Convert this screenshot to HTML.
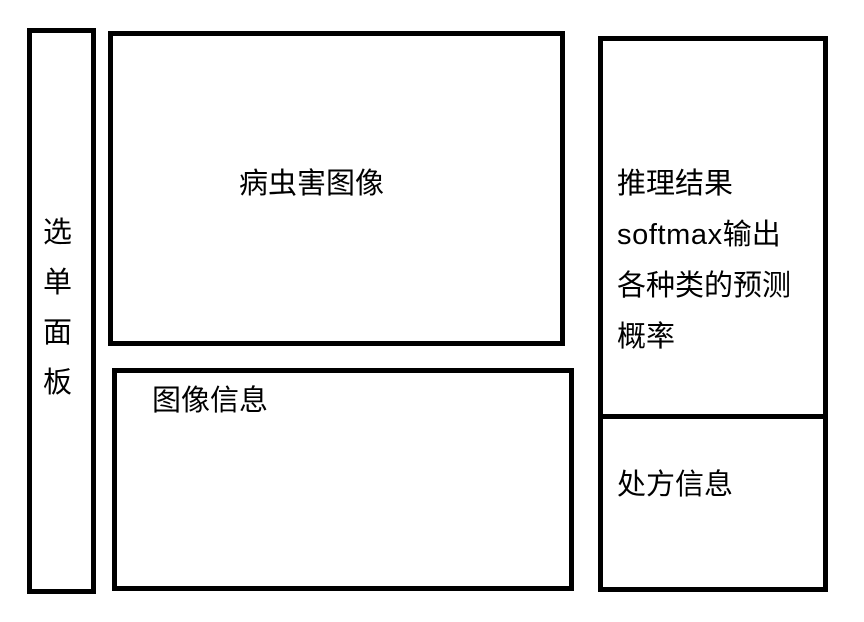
<!DOCTYPE html>
<html><head><meta charset="utf-8"><style>
body{margin:0;width:864px;height:622px;background:#fff;position:relative;overflow:hidden;font-family:"Liberation Sans","Noto Sans CJK SC",sans-serif;}
.b{position:absolute;border:5px solid #000;box-sizing:border-box;}
.t{position:absolute;font-size:29px;line-height:32px;color:#000;white-space:nowrap;}
</style></head><body>
<div class="b" style="left:27px;top:28px;width:69px;height:566px"></div>
<div class="b" style="left:108px;top:31px;width:457px;height:315px"></div>
<div class="b" style="left:112px;top:368px;width:462px;height:223px"></div>
<div class="b" style="left:598px;top:36px;width:230px;height:556px"></div>
<div style="position:absolute;left:600px;top:414px;width:226px;height:5px;background:#000"></div>
<div class="t" style="left:43px;top:208px;line-height:50px;width:32px;white-space:normal">选<br>单<br>面<br>板</div>
<div class="t" style="left:239px;top:168px">病虫害图像</div>
<div class="t" style="left:152px;top:385px">图像信息</div>
<div class="t" style="left:617px;top:159px;line-height:51px">推理结果<br><span style="letter-spacing:0.6px">softmax</span>输出<br>各种类的预测<br>概率</div>
<div class="t" style="left:617px;top:469px">处方信息</div>
</body></html>
